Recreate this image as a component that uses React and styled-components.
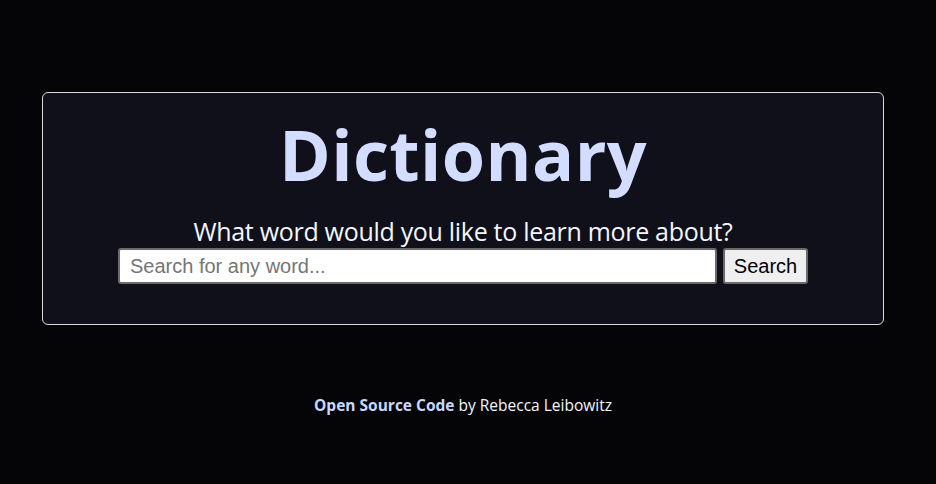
import React, { useState } from 'react';
import styled, { createGlobalStyle } from 'styled-components';

const GlobalStyle = createGlobalStyle`
  html, body {
    margin: 0;
    padding: 0;
    background: #050508;
  }
  body {
    font-family: "Open Sans", "Noto Sans", sans-serif;
  }
`;

const Page = styled.div`
  min-height: 484px;
  padding: 92px 52px 0 42px;
  box-sizing: border-box;
`;

const Card = styled.section`
  background: #0f1019;
  border: 1px solid #d9d9de;
  border-radius: 6px;
  height: 233px;
  box-sizing: border-box;
  display: flex;
  flex-direction: column;
  align-items: center;
  padding-top: 16px;
`;

const Title = styled.h1`
  margin: 0;
  font-size: 70px;
  font-weight: 700;
  line-height: 90px;
  color: #d2ddff;
  letter-spacing: 0.4px;
`;

const Prompt = styled.h2`
  margin: 17px 0 0;
  font-size: 25px;
  font-weight: 400;
  line-height: 30px;
  color: #f4f6ff;
  letter-spacing: -0.3px;
`;

const SearchForm = styled.form`
  display: flex;
  gap: 6px;
  margin-top: 2px;
`;

const SearchInput = styled.input`
  width: 599px;
  height: 36px;
  box-sizing: border-box;
  font-family: "Liberation Sans", Arial, sans-serif;
  font-size: 20px;
  padding: 0 10px;
  border: 2px solid #6b6b6b;
  border-radius: 3px;
  background: #fff;
  color: #000;
  &::placeholder {
    color: #757575;
  }
`;

const SearchButton = styled.button`
  height: 36px;
  width: 85px;
  padding: 0;
  font-family: "Liberation Sans", Arial, sans-serif;
  font-size: 20px;
  color: #000;
  background: #efefef;
  border: 2px solid #6b6b6b;
  border-radius: 3px;
`;

const Footer = styled.footer`
  text-align: center;
  margin-top: 69px;
  font-size: 15.5px;
  color: #f4f6ff;
`;

const SourceLink = styled.a`
  color: #c9d8ff;
  font-weight: 700;
  text-decoration: none;
`;

export default function App() {
  const [word, setWord] = useState('');
  return (
    <Page>
      <GlobalStyle />
      <Card>
        <Title>Dictionary</Title>
        <Prompt>What word would you like to learn more about?</Prompt>
        <SearchForm onSubmit={(e) => e.preventDefault()}>
          <SearchInput
            type="search"
            placeholder="Search for any word..."
            value={word}
            onChange={(e) => setWord(e.target.value)}
          />
          <SearchButton type="submit">Search</SearchButton>
        </SearchForm>
      </Card>
      <Footer>
        <SourceLink href="#">Open Source Code</SourceLink> by Rebecca Leibowitz
      </Footer>
    </Page>
  );
}
